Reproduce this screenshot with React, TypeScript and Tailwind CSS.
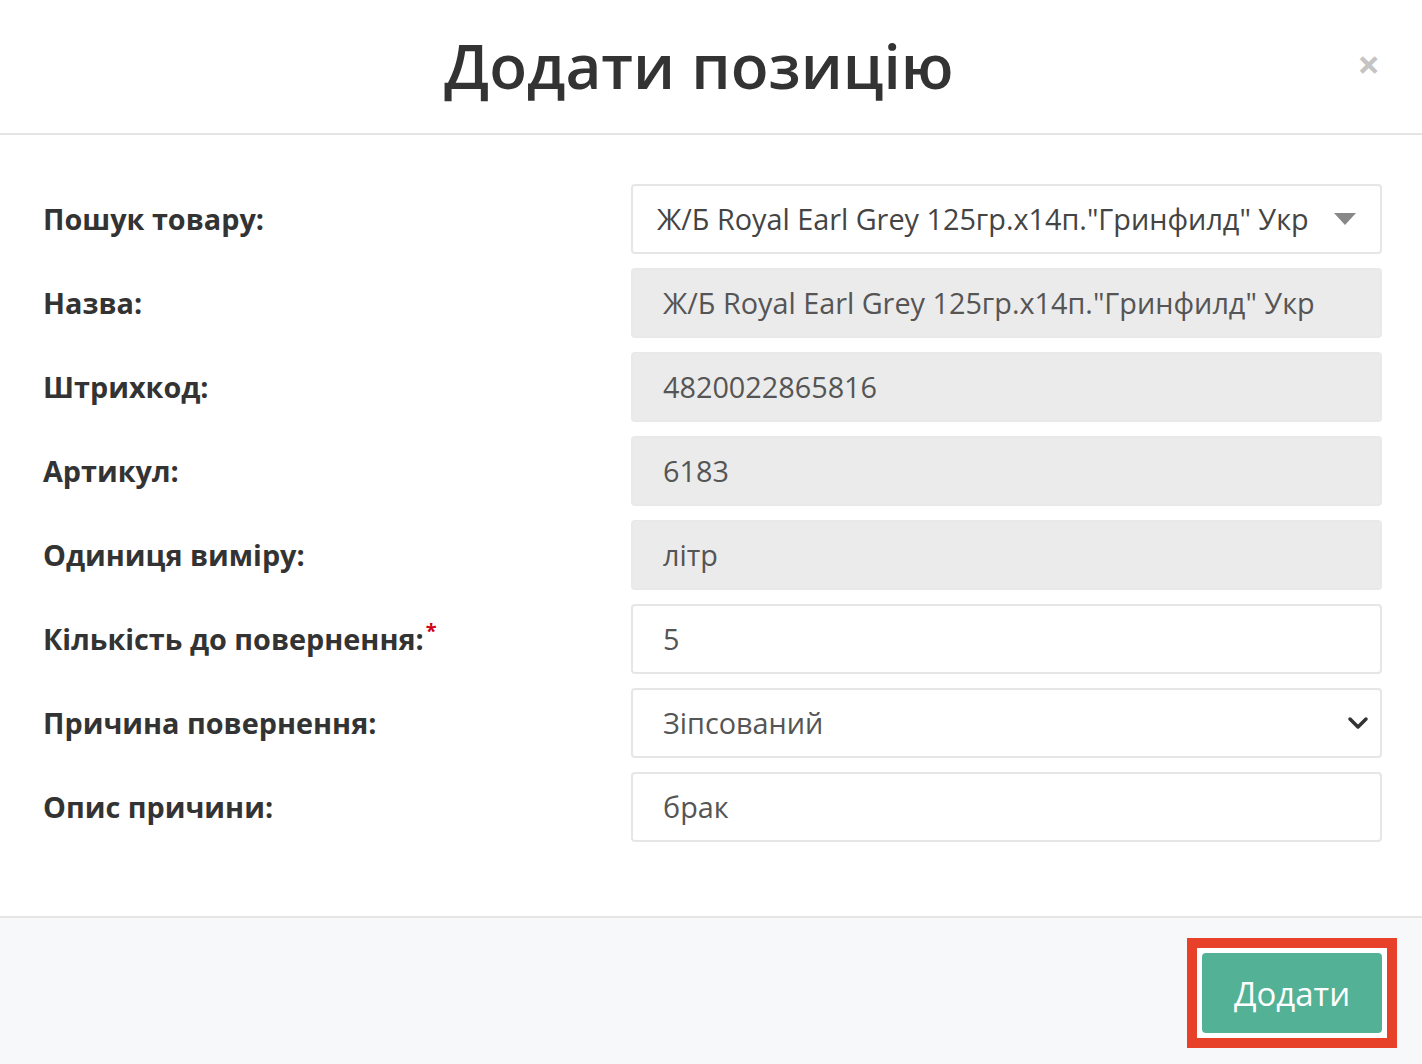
import React from "react";

const font = { fontFamily: '"Open Sans", "Noto Sans", sans-serif' };

function Label({ text, required }: { text: string; required?: boolean }) {
  return (
    <div className="text-[28.8px] font-bold text-[#333333] leading-none whitespace-nowrap">
      {text}
      {required && <span className="text-[#d0021b] text-[20px] align-top relative -top-[4px] ml-[2px]">*</span>}
    </div>
  );
}

function Field({ children, gray }: { children: React.ReactNode; gray?: boolean }) {
  return (
    <div
      className={`h-[70px] flex items-center px-[30px] border-2 rounded-[4px] text-[28.8px] text-[#555555] ${
        gray ? "bg-[#ebebeb] border-[#e9e9e9]" : "bg-white border-[#e6e6e6]"
      }`}
    >
      {children}
    </div>
  );
}

export default function App() {
  const rows: { label: string; required?: boolean; content: React.ReactNode }[] = [
    {
      label: "Пошук товару:",
      content: (
        <div className="h-[70px] flex items-center justify-between pl-[24px] pr-[24px] border-2 border-[#e6e6e6] rounded-[4px] bg-white text-[28.8px] text-[#444444]">
          <span className="whitespace-nowrap">Ж/Б Royal Earl Grey 125гр.x14п."Гринфилд" Укр</span>
          <svg width="22" height="12" viewBox="0 0 22 12">
            <path d="M0 0 L22 0 L11 12 Z" fill="#888888" />
          </svg>
        </div>
      ),
    },
    {
      label: "Назва:",
      content: (
        <Field gray>
          <span className="whitespace-nowrap">Ж/Б Royal Earl Grey 125гр.x14п."Гринфилд" Укр</span>
        </Field>
      ),
    },
    { label: "Штрихкод:", content: <Field gray>4820022865816</Field> },
    { label: "Артикул:", content: <Field gray>6183</Field> },
    { label: "Одиниця виміру:", content: <Field gray>літр</Field> },
    { label: "Кількість до повернення:", required: true, content: <Field>5</Field> },
    {
      label: "Причина повернення:",
      content: (
        <div className="h-[70px] flex items-center justify-between pl-[30px] pr-[11px] border-2 border-[#e6e6e6] rounded-[4px] bg-white text-[28.8px] text-[#555555]">
          <span>Зіпсований</span>
          <svg width="22" height="14" viewBox="0 0 22 14">
            <path d="M3 3 L11 11 L19 3" fill="none" stroke="#333333" strokeWidth="3.5" strokeLinecap="round" strokeLinejoin="round" />
          </svg>
        </div>
      ),
    },
    { label: "Опис причини:", content: <Field>брак</Field> },
  ];

  return (
    <div className="w-[1422px] h-[1064px] bg-white flex flex-col overflow-hidden" style={font}>
      <div className="h-[135px] shrink-0 border-b-2 border-[#e5e5e5] relative flex items-center justify-center pr-[24px]">
        <h4 className="text-[62px] font-semibold text-[#333333] leading-none -mt-[4px]">Додати позицію</h4>
        <div className="absolute right-[42px] top-[44px] text-[40px] font-bold text-[#c4c4c4] leading-none">×</div>
      </div>
      <div className="flex-1 pt-[49px] pl-[43px] pr-[40px] flex flex-col gap-[14px]">
        {rows.map((r) => (
          <div key={r.label} className="flex items-center">
            <div className="w-[588px] shrink-0">
              <Label text={r.label} required={r.required} />
            </div>
            <div className="flex-1">{r.content}</div>
          </div>
        ))}
      </div>
      <div className="h-[148px] shrink-0 bg-[#f7f8fa] border-t-2 border-[#e6e6e6] flex items-start justify-end pr-[25px] pt-[20px]">
        <div className="border-[10px] border-[#e8412a] bg-white p-[5px]">
          <button className="w-[180px] h-[80px] rounded-[4px] bg-[#53b196] text-white text-[33px] leading-none flex items-center justify-center">
            Додати
          </button>
        </div>
      </div>
    </div>
  );
}
